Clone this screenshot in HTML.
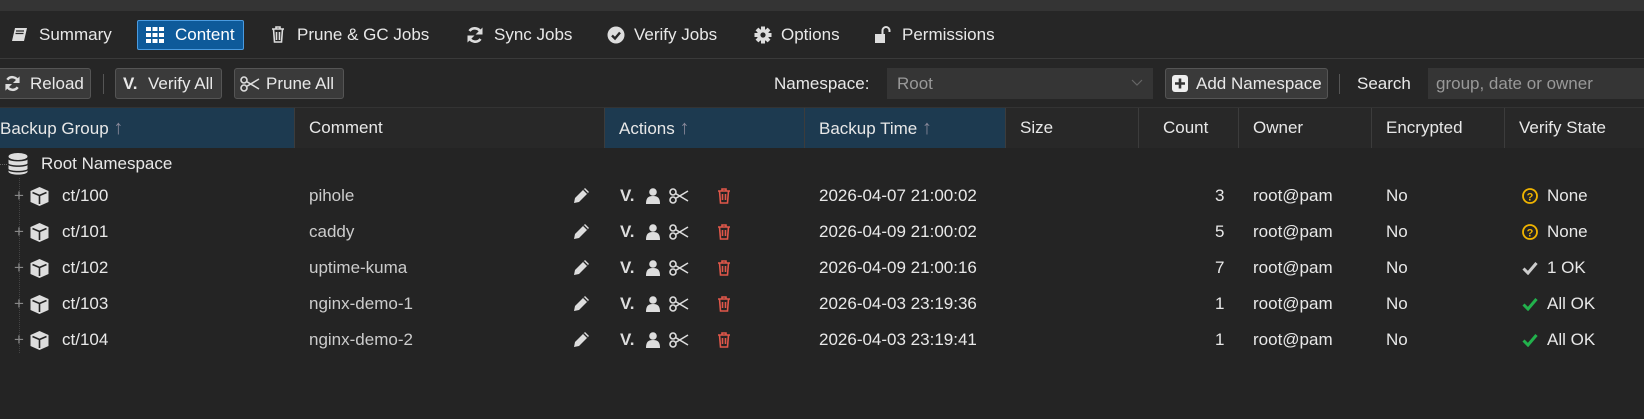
<!DOCTYPE html>
<html><head><meta charset="utf-8"><style>
*{box-sizing:border-box;margin:0;padding:0}
body{width:1644px;height:419px;background:#242424;font-family:"Liberation Sans",Arial,sans-serif;font-size:17px;color:#e8e8e8;position:relative;overflow:hidden}
.abs{position:absolute;white-space:nowrap}
.top{left:0;top:0;width:1644px;height:11px;background:#343434}
.tabs{left:0;top:11px;width:1644px;height:48px;background:#262626;border-bottom:1px solid #3a3a3a}
.tb{left:0;top:59px;width:1644px;height:49px;background:#262626;border-bottom:1px solid #333}
.btn{background:#3a3a3a;border:1px solid #555;border-radius:3px;height:31px;top:68px}
.hdr{top:108px;height:40px;line-height:40px;background:#282828;border-right:1px solid #3c3c3c}
.hb{background:#1d3a50}
.arrow{color:#889;font-size:20px;font-weight:100}
svg{position:absolute}
.row{position:absolute;left:0;width:1644px;height:36px}
.row>*{position:absolute}
.row div{white-space:nowrap;top:8px}
</style></head><body>
<svg width="0" height="0" style="position:absolute"><defs>
<g id="sc"><circle cx="4" cy="4" r="3" stroke="#ddd" stroke-width="1.6" fill="none"/><circle cx="4" cy="12" r="3" stroke="#ddd" stroke-width="1.6" fill="none"/><path d="M6.5 5.5L19 13M6.5 10.5L19 3" stroke="#ddd" stroke-width="1.6"/></g>
<g id="cube"><path d="M10.5 1l9 4v11l-9 4-9-4V5z" fill="#ddd"/><path d="M3.5 6.5l7 3 7-3M10.5 9.5v8.5" stroke="#242424" stroke-width="1.6" fill="none"/></g>
<g id="pen"><path d="M12 1l4 4-10 10-5 1 1-5z" fill="#ddd"/><path d="M10.5 2.5l4 4" stroke="#242424" stroke-width="1.3"/></g>
<g id="usr"><circle cx="7" cy="4" r="3.8" fill="#ddd"/><path d="M0 16c0-6 2-8 7-8s7 2 7 8z" fill="#ddd"/></g>
<g id="tr"><path d="M1 3h12M5 3V1h4v2M2.5 3l1 12h7l1-12M5.5 6v6M8.5 6v6" stroke="#e0574a" stroke-width="1.6" fill="none"/></g>
<g id="q"><circle cx="8" cy="8" r="7" stroke="#f0b400" stroke-width="1.8" fill="none"/><text x="8" y="12.3" font-size="11" font-weight="bold" fill="#f0b400" text-anchor="middle" font-family="Liberation Sans">?</text></g>
</defs></svg>
<div class="abs top"></div>
<div class="abs tabs"></div>
<div class="abs tb"></div>

<svg style="left:11px;top:27px" width="17" height="16" viewBox="0 0 17 16"><path d="M4 1h12l-3 13H1z" fill="#ddd"/><path d="M5 4h8M4.5 6.5h8" stroke="#262626" stroke-width="1.3"/></svg>
<div class="abs" style="left:39px;top:25px">Summary</div>
<div class="abs" style="left:137px;top:20px;width:107px;height:30px;background:#0e5a9a;border:1px solid #4a9be0;border-radius:2px"></div>
<svg style="left:146px;top:27px" width="18" height="16" viewBox="0 0 18 16"><g fill="#fff"><rect x="0" y="0" width="5" height="4"/><rect x="6.5" y="0" width="5" height="4"/><rect x="13" y="0" width="5" height="4"/><rect x="0" y="6" width="5" height="4"/><rect x="6.5" y="6" width="5" height="4"/><rect x="13" y="6" width="5" height="4"/><rect x="0" y="12" width="5" height="4"/><rect x="6.5" y="12" width="5" height="4"/><rect x="13" y="12" width="5" height="4"/></g></svg>
<div class="abs" style="left:175px;top:25px;color:#fff">Content</div>
<svg style="left:271px;top:26px" width="14" height="17" viewBox="0 0 14 17"><path d="M1 3h12M5 3V1h4v2M2.5 3l1 13h7l1-13M5.5 6v8M8.5 6v8" stroke="#ddd" stroke-width="1.6" fill="none"/></svg>
<div class="abs" style="left:297px;top:25px">Prune &amp; GC Jobs</div>
<svg style="left:466px;top:26px" width="18" height="18" viewBox="0 0 18 18"><path d="M15 7A6.5 6.5 0 0 0 3.5 5M3 11a6.5 6.5 0 0 0 11.5 2" stroke="#ddd" stroke-width="2.6" fill="none"/><path d="M16.5 1.5v7h-7zM1.5 16.5v-7h7z" fill="#ddd"/></svg>
<div class="abs" style="left:494px;top:25px">Sync Jobs</div>
<svg style="left:607px;top:26px" width="18" height="18" viewBox="0 0 18 18"><circle cx="9" cy="9" r="8.5" fill="#ddd"/><path d="M5 9.5l3 3 5-6" stroke="#262626" stroke-width="2.4" fill="none"/></svg>
<div class="abs" style="left:634px;top:25px">Verify Jobs</div>
<svg style="left:754px;top:26px" width="18" height="18" viewBox="0 0 18 18"><g fill="#ddd"><circle cx="9" cy="9" r="6"/><rect x="7" y="0.5" width="4" height="17"/><rect x="0.5" y="7" width="17" height="4"/><rect x="7" y="0.5" width="4" height="17" transform="rotate(45 9 9)"/><rect x="7" y="0.5" width="4" height="17" transform="rotate(-45 9 9)"/></g><circle cx="9" cy="9" r="2.6" fill="#262626"/></svg>
<div class="abs" style="left:781px;top:25px">Options</div>
<svg style="left:875px;top:26px" width="18" height="17" viewBox="0 0 18 17"><rect x="0" y="8" width="10" height="9" fill="#ddd"/><path d="M7.5 8V4.5a3.5 3.5 0 0 1 7 0V6" stroke="#ddd" stroke-width="2" fill="none"/></svg>
<div class="abs" style="left:902px;top:25px">Permissions</div>

<div class="abs btn" style="left:-4px;width:95px"></div>
<svg style="left:4px;top:75px" width="17" height="17" viewBox="0 0 18 18"><path d="M15 7A6.5 6.5 0 0 0 3.5 5M3 11a6.5 6.5 0 0 0 11.5 2" stroke="#ddd" stroke-width="2.6" fill="none"/><path d="M16.5 1.5v7h-7zM1.5 16.5v-7h7z" fill="#ddd"/></svg>
<div class="abs" style="left:30px;top:74px">Reload</div>
<div class="abs" style="left:103px;top:74px;width:1px;height:20px;background:#555"></div>
<div class="abs btn" style="left:115px;width:107px"></div>
<div class="abs" style="left:123px;top:74px;font-weight:bold">V.</div>
<div class="abs" style="left:148px;top:74px">Verify All</div>
<div class="abs btn" style="left:234px;width:110px"></div>
<svg style="left:240px;top:76px" width="20" height="16" viewBox="0 0 20 16"><use href="#sc"/></svg>
<div class="abs" style="left:266px;top:74px">Prune All</div>
<div class="abs" style="left:774px;top:74px">Namespace:</div>
<div class="abs" style="left:887px;top:68px;width:266px;height:31px;background:#353535"></div>
<div class="abs" style="left:897px;top:74px;color:#999">Root</div>
<svg style="left:1131px;top:79px" width="12" height="8" viewBox="0 0 12 8"><path d="M1 1l5 5 5-5" stroke="#666" fill="none" stroke-width="1.2"/></svg>
<div class="abs btn" style="left:1165px;width:163px"></div>
<svg style="left:1172px;top:75px" width="16" height="17" viewBox="0 0 16 17"><rect x="0" y="0" width="16" height="17" rx="3" fill="#eee"/><path d="M8 3.5v10M3 8.5h10" stroke="#333" stroke-width="2.6"/></svg>
<div class="abs" style="left:1196px;top:74px">Add Namespace</div>
<div class="abs" style="left:1339px;top:74px;width:1px;height:20px;background:#555"></div>
<div class="abs" style="left:1357px;top:74px">Search</div>
<div class="abs" style="left:1428px;top:68px;width:216px;height:31px;background:#353535"></div>
<div class="abs" style="left:1436px;top:74px;color:#999">group, date or owner</div>

<div class="abs hdr hb" style="left:0;width:295px">Backup Group <span class="arrow">↑</span></div>
<div class="abs hdr" style="left:295px;width:310px;padding-left:14px">Comment</div>
<div class="abs hdr hb" style="left:605px;width:200px;padding-left:14px">Actions <span class="arrow">↑</span></div>
<div class="abs hdr hb" style="left:805px;width:201px;padding-left:14px">Backup Time <span class="arrow">↑</span></div>
<div class="abs hdr" style="left:1006px;width:133px;padding-left:14px">Size</div>
<div class="abs hdr" style="left:1139px;width:100px;padding-left:24px">Count</div>
<div class="abs hdr" style="left:1239px;width:133px;padding-left:14px">Owner</div>
<div class="abs hdr" style="left:1372px;width:133px;padding-left:14px">Encrypted</div>
<div class="abs hdr" style="left:1505px;width:139px;padding-left:14px;border-right:none">Verify State</div>

<div class="abs" style="left:0;top:164px;width:7px;border-top:1px dotted #666"></div>
<div class="abs" style="left:19px;top:178px;height:175px;border-left:1px dotted #444"></div>

<svg style="left:8px;top:153px" width="20" height="22" viewBox="0 0 20 22"><g fill="#ddd"><ellipse cx="10" cy="3.5" rx="9.5" ry="3.5"/><path d="M0.5 6.5c2 2.5 17 2.5 19 0v4c-2 2.5-17 2.5-19 0z"/><path d="M0.5 12c2 2.5 17 2.5 19 0v4c-2 2.5-17 2.5-19 0z"/><path d="M0.5 17.5c2 2.5 17 2.5 19 0V19c-2 3.5-17 3.5-19 0z"/></g></svg>
<div class="abs" style="left:41px;top:154px">Root Namespace</div>

<div class="row" style="top:178px">
<div style="left:14px;color:#888">+</div>
<svg style="left:29px;top:8px" width="21" height="21"><use href="#cube"/></svg>
<div style="left:62px">ct/100</div>
<div style="left:309px;color:#ccc">pihole</div>
<svg style="left:573px;top:9px" width="17" height="17"><use href="#pen"/></svg>
<div style="left:620px;font-weight:bold;color:#ddd">V.</div>
<svg style="left:646px;top:10px" width="14" height="16"><use href="#usr"/></svg>
<svg style="left:669px;top:10px" width="20" height="16"><use href="#sc"/></svg>
<svg style="left:717px;top:10px" width="14" height="16"><use href="#tr"/></svg>
<div style="left:819px">2026-04-07 21:00:02</div>
<div style="left:1215px">3</div>
<div style="left:1253px">root@pam</div>
<div style="left:1386px">No</div>
<svg style="left:1522px;top:10px" width="16" height="16"><use href="#q"/></svg>
<div style="left:1547px">None</div>
</div>

<div class="row" style="top:214px">
<div style="left:14px;color:#888">+</div>
<svg style="left:29px;top:8px" width="21" height="21"><use href="#cube"/></svg>
<div style="left:62px">ct/101</div>
<div style="left:309px;color:#ccc">caddy</div>
<svg style="left:573px;top:9px" width="17" height="17"><use href="#pen"/></svg>
<div style="left:620px;font-weight:bold;color:#ddd">V.</div>
<svg style="left:646px;top:10px" width="14" height="16"><use href="#usr"/></svg>
<svg style="left:669px;top:10px" width="20" height="16"><use href="#sc"/></svg>
<svg style="left:717px;top:10px" width="14" height="16"><use href="#tr"/></svg>
<div style="left:819px">2026-04-09 21:00:02</div>
<div style="left:1215px">5</div>
<div style="left:1253px">root@pam</div>
<div style="left:1386px">No</div>
<svg style="left:1522px;top:10px" width="16" height="16"><use href="#q"/></svg>
<div style="left:1547px">None</div>
</div>

<div class="row" style="top:250px">
<div style="left:14px;color:#888">+</div>
<svg style="left:29px;top:8px" width="21" height="21"><use href="#cube"/></svg>
<div style="left:62px">ct/102</div>
<div style="left:309px;color:#ccc">uptime-kuma</div>
<svg style="left:573px;top:9px" width="17" height="17"><use href="#pen"/></svg>
<div style="left:620px;font-weight:bold;color:#ddd">V.</div>
<svg style="left:646px;top:10px" width="14" height="16"><use href="#usr"/></svg>
<svg style="left:669px;top:10px" width="20" height="16"><use href="#sc"/></svg>
<svg style="left:717px;top:10px" width="14" height="16"><use href="#tr"/></svg>
<div style="left:819px">2026-04-09 21:00:16</div>
<div style="left:1215px">7</div>
<div style="left:1253px">root@pam</div>
<div style="left:1386px">No</div>
<svg style="left:1522px;top:11px" width="16" height="14" viewBox="0 0 16 14"><path d="M1.5 7.5l4.5 4.5 8.5-10" stroke="#ccc" stroke-width="3" fill="none"/></svg>
<div style="left:1547px">1 OK</div>
</div>

<div class="row" style="top:286px">
<div style="left:14px;color:#888">+</div>
<svg style="left:29px;top:8px" width="21" height="21"><use href="#cube"/></svg>
<div style="left:62px">ct/103</div>
<div style="left:309px;color:#ccc">nginx-demo-1</div>
<svg style="left:573px;top:9px" width="17" height="17"><use href="#pen"/></svg>
<div style="left:620px;font-weight:bold;color:#ddd">V.</div>
<svg style="left:646px;top:10px" width="14" height="16"><use href="#usr"/></svg>
<svg style="left:669px;top:10px" width="20" height="16"><use href="#sc"/></svg>
<svg style="left:717px;top:10px" width="14" height="16"><use href="#tr"/></svg>
<div style="left:819px">2026-04-03 23:19:36</div>
<div style="left:1215px">1</div>
<div style="left:1253px">root@pam</div>
<div style="left:1386px">No</div>
<svg style="left:1522px;top:11px" width="16" height="14" viewBox="0 0 16 14"><path d="M1.5 7.5l4.5 4.5 8.5-10" stroke="#22b14c" stroke-width="3" fill="none"/></svg>
<div style="left:1547px">All OK</div>
</div>

<div class="row" style="top:322px">
<div style="left:14px;color:#888">+</div>
<svg style="left:29px;top:8px" width="21" height="21"><use href="#cube"/></svg>
<div style="left:62px">ct/104</div>
<div style="left:309px;color:#ccc">nginx-demo-2</div>
<svg style="left:573px;top:9px" width="17" height="17"><use href="#pen"/></svg>
<div style="left:620px;font-weight:bold;color:#ddd">V.</div>
<svg style="left:646px;top:10px" width="14" height="16"><use href="#usr"/></svg>
<svg style="left:669px;top:10px" width="20" height="16"><use href="#sc"/></svg>
<svg style="left:717px;top:10px" width="14" height="16"><use href="#tr"/></svg>
<div style="left:819px">2026-04-03 23:19:41</div>
<div style="left:1215px">1</div>
<div style="left:1253px">root@pam</div>
<div style="left:1386px">No</div>
<svg style="left:1522px;top:11px" width="16" height="14" viewBox="0 0 16 14"><path d="M1.5 7.5l4.5 4.5 8.5-10" stroke="#22b14c" stroke-width="3" fill="none"/></svg>
<div style="left:1547px">All OK</div>
</div>
</body></html>
